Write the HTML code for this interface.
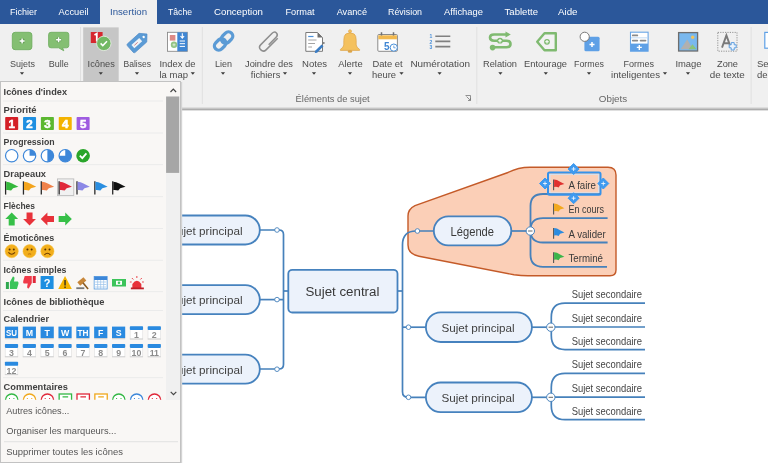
<!DOCTYPE html>
<html><head><meta charset="utf-8"><style>
html,body{margin:0;padding:0;width:768px;height:464px;overflow:hidden;background:#fff;}
svg{display:block;will-change:transform;font-family:"Liberation Sans",sans-serif;}
</style></head><body>
<svg width="768" height="464" viewBox="0 0 768 464">
<rect x="0" y="0" width="768" height="464" fill="#ffffff"/>
<path d="M530,167.2 L608,167.2 Q616,167.2 616,175 L616,270 Q616,275.8 610,275.8 L528,275.8 Q521,275.8 514,274.8 L419,256.2 Q408,254 408,245 L408,216 Q408,209 415,205.6 L508,172.5 Q518,167.2 530,167.2 Z" fill="#fbcfb7" stroke="#c45a28" stroke-width="1.4"/>
<path d="M259.8,230 H279 Q283.5,230 283.5,234.5 V364.5 Q283.5,369 279,369 H259.8" fill="none" stroke="#4681bb" stroke-width="1.7"/>
<path d="M259.8,299.6 H283.5" fill="none" stroke="#4681bb" stroke-width="1.7"/>
<path d="M283.5,291 H288.3" fill="none" stroke="#4681bb" stroke-width="1.7"/>
<rect x="150" y="215.5" width="109.8" height="29" rx="14.5" fill="#ecf2fb" stroke="#4682be" stroke-width="1.8"/>
<text x="169.2" y="234.6" font-size="11.3" fill="#424242" textLength="73.3" lengthAdjust="spacingAndGlyphs">Sujet principal</text>
<rect x="150" y="285.1" width="109.8" height="29" rx="14.5" fill="#ecf2fb" stroke="#4682be" stroke-width="1.8"/>
<text x="169.2" y="304.20000000000005" font-size="11.3" fill="#424242" textLength="73.3" lengthAdjust="spacingAndGlyphs">Sujet principal</text>
<rect x="150" y="354.7" width="109.8" height="29" rx="14.5" fill="#ecf2fb" stroke="#4682be" stroke-width="1.8"/>
<text x="169.2" y="373.8" font-size="11.3" fill="#424242" textLength="73.3" lengthAdjust="spacingAndGlyphs">Sujet principal</text>
<circle cx="277" cy="230" r="2.3" fill="#fff" stroke="#4681bb" stroke-width="0.9"/>
<circle cx="277" cy="299.6" r="2.3" fill="#fff" stroke="#4681bb" stroke-width="0.9"/>
<circle cx="277" cy="369.2" r="2.3" fill="#fff" stroke="#4681bb" stroke-width="0.9"/>
<path d="M397.5,291 H402.5" stroke="#4681bb" stroke-width="1.7"/>
<path d="M426,397.3 H408 Q402.5,397.3 402.5,391.8 V245 Q402.5,231 416,231 H434" fill="none" stroke="#4681bb" stroke-width="1.7"/>
<path d="M402.5,327.2 H426" fill="none" stroke="#4681bb" stroke-width="1.7"/>
<rect x="288.3" y="269.8" width="109.2" height="42.7" rx="4" fill="#ecf2fb" stroke="#4682be" stroke-width="1.8"/>
<text x="305.4" y="296.3" font-size="13.7" fill="#383838" textLength="74" lengthAdjust="spacingAndGlyphs">Sujet central</text>
<circle cx="408.5" cy="327.2" r="2.3" fill="#fff" stroke="#4681bb" stroke-width="0.9"/>
<rect x="425.9" y="312.4" width="106" height="29.6" rx="14.8" fill="#ecf2fb" stroke="#4682be" stroke-width="1.8"/>
<text x="441.4" y="331.7" font-size="11.3" fill="#424242" textLength="73.3" lengthAdjust="spacingAndGlyphs">Sujet principal</text>
<path d="M531.9,327.2 H551.3" stroke="#4681bb" stroke-width="1.7"/>
<path d="M645,303.2 H565 Q551.3,303.2 551.3,317.2 V335.59999999999997 Q551.3,349.59999999999997 565,349.59999999999997 H645 M551.3,327.0 H645" fill="none" stroke="#4681bb" stroke-width="1.7"/>
<circle cx="550.8" cy="327.2" r="4.2" fill="#fff" stroke="#4681bb" stroke-width="1"/><path d="M548.6,327.2 H553" stroke="#666" stroke-width="1"/>
<text x="571.7" y="298.09999999999997" font-size="10.1" fill="#444" textLength="70.2" lengthAdjust="spacingAndGlyphs">Sujet secondaire</text>
<text x="571.7" y="321.9" font-size="10.1" fill="#444" textLength="70.2" lengthAdjust="spacingAndGlyphs">Sujet secondaire</text>
<text x="571.7" y="344.49999999999994" font-size="10.1" fill="#444" textLength="70.2" lengthAdjust="spacingAndGlyphs">Sujet secondaire</text>
<circle cx="408.5" cy="397.3" r="2.3" fill="#fff" stroke="#4681bb" stroke-width="0.9"/>
<rect x="425.9" y="382.5" width="106" height="29.6" rx="14.8" fill="#ecf2fb" stroke="#4682be" stroke-width="1.8"/>
<text x="441.4" y="401.8" font-size="11.3" fill="#424242" textLength="73.3" lengthAdjust="spacingAndGlyphs">Sujet principal</text>
<path d="M531.9,397.3 H551.3" stroke="#4681bb" stroke-width="1.7"/>
<path d="M645,373.3 H565 Q551.3,373.3 551.3,387.3 V405.7 Q551.3,419.7 565,419.7 H645 M551.3,397.1 H645" fill="none" stroke="#4681bb" stroke-width="1.7"/>
<circle cx="550.8" cy="397.3" r="4.2" fill="#fff" stroke="#4681bb" stroke-width="1"/><path d="M548.6,397.3 H553" stroke="#666" stroke-width="1"/>
<text x="571.7" y="368.2" font-size="10.1" fill="#444" textLength="70.2" lengthAdjust="spacingAndGlyphs">Sujet secondaire</text>
<text x="571.7" y="392.0" font-size="10.1" fill="#444" textLength="70.2" lengthAdjust="spacingAndGlyphs">Sujet secondaire</text>
<text x="571.7" y="414.59999999999997" font-size="10.1" fill="#444" textLength="70.2" lengthAdjust="spacingAndGlyphs">Sujet secondaire</text>
<circle cx="417.4" cy="231" r="2.3" fill="#fff" stroke="#4681bb" stroke-width="0.9"/>
<rect x="433.8" y="216.3" width="77.5" height="29" rx="14.5" fill="#ecf2fb" stroke="#4682be" stroke-width="1.8"/>
<text x="450.6" y="235.5" font-size="12.3" fill="#3a3a3a" textLength="43.4" lengthAdjust="spacingAndGlyphs">Légende</text>
<path d="M511.3,231 H530.5" stroke="#4681bb" stroke-width="1.7"/>
<path d="M600,194 H543 Q530.5,194 530.5,206 V254.8 Q530.5,266.8 543,266.8 H607" fill="none" stroke="#4681bb" stroke-width="1.8"/>
<path d="M530.5,230.2 Q530.5,218.2 543,218.2 H607.6 M530.5,230.5 Q530.5,242.5 543,242.5 H607.6" fill="none" stroke="#4681bb" stroke-width="1.8"/>
<circle cx="530.3" cy="231" r="4.2" fill="#fff" stroke="#4681bb" stroke-width="1"/><path d="M528.1,231 H532.5" stroke="#666" stroke-width="1"/>
<path d="M553.6,179.4 V190.20000000000002" stroke="#555" stroke-width="1.1"/><path d="M554.1,179.4 Q557.1,179.6 559.6,181.4 L564.4,184.0 L560.1,185.20000000000002 L558.6,187.4 Q556.6,186.4 554.1,187.0 Z" fill="#e0312f"/>
<text x="568.5" y="189.2" font-size="10.9" fill="#3a3a3a" textLength="27.5" lengthAdjust="spacingAndGlyphs">A faire</text>
<path d="M553.6,203.6 V214.4" stroke="#555" stroke-width="1.1"/><path d="M554.1,203.6 Q557.1,203.79999999999998 559.6,205.6 L564.4,208.2 L560.1,209.4 L558.6,211.6 Q556.6,210.6 554.1,211.2 Z" fill="#f2a81d"/>
<text x="568.5" y="213.39999999999998" font-size="10.9" fill="#3a3a3a" textLength="35.5" lengthAdjust="spacingAndGlyphs">En cours</text>
<path d="M553.6,227.9 V238.70000000000002" stroke="#555" stroke-width="1.1"/><path d="M554.1,227.9 Q557.1,228.1 559.6,229.9 L564.4,232.5 L560.1,233.70000000000002 L558.6,235.9 Q556.6,234.9 554.1,235.5 Z" fill="#2a8be0"/>
<text x="568.5" y="237.7" font-size="10.9" fill="#3a3a3a" textLength="37.2" lengthAdjust="spacingAndGlyphs">A valider</text>
<path d="M553.6,252.20000000000002 V263.0" stroke="#555" stroke-width="1.1"/><path d="M554.1,252.20000000000002 Q557.1,252.4 559.6,254.20000000000002 L564.4,256.8 L560.1,258.0 L558.6,260.20000000000005 Q556.6,259.20000000000005 554.1,259.8 Z" fill="#3bb54a"/>
<text x="568.5" y="262.0" font-size="10.9" fill="#3a3a3a" textLength="34.5" lengthAdjust="spacingAndGlyphs">Terminé</text>
<rect x="548" y="172.4" width="52.5" height="22.4" rx="1.5" fill="none" stroke="#3592ea" stroke-width="2"/><rect x="550" y="174.4" width="48.5" height="18.4" fill="none" stroke="#cfe3f7" stroke-width="0.8"/>
<path d="M573.6,163.5 L579.1,169 L573.6,174.5 L568.1,169 Z" fill="#3f9aef" stroke="#3f9aef" stroke-width="1" stroke-linejoin="round"/><path d="M571.6,169 H575.6 M573.6,167 V171" stroke="#fff" stroke-width="0.8"/>
<path d="M573.6,192.7 L579.1,198.2 L573.6,203.7 L568.1,198.2 Z" fill="#3f9aef" stroke="#3f9aef" stroke-width="1" stroke-linejoin="round"/><path d="M571.6,198.2 H575.6 M573.6,196.2 V200.2" stroke="#fff" stroke-width="0.8"/>
<path d="M545,178.0 L550.5,183.5 L545,189.0 L539.5,183.5 Z" fill="#3f9aef" stroke="#3f9aef" stroke-width="1" stroke-linejoin="round"/><path d="M543,183.5 H547 M545,181.5 V185.5" stroke="#fff" stroke-width="0.8"/>
<path d="M603.3,178.0 L608.8,183.5 L603.3,189.0 L597.8,183.5 Z" fill="#3f9aef" stroke="#3f9aef" stroke-width="1" stroke-linejoin="round"/><path d="M601.3,183.5 H605.3 M603.3,181.5 V185.5" stroke="#fff" stroke-width="0.8"/>
<rect x="0" y="24" width="768" height="84" fill="#f0f0f0"/>
<rect x="0" y="107.4" width="768" height="1" fill="#d2d2d2"/><rect x="0" y="108.4" width="768" height="1.7" fill="#acacac"/><rect x="0" y="110.1" width="768" height="0.9" fill="#dcdcdc"/>
<rect x="80" y="27" width="1" height="77" fill="#e0e0e0"/>
<rect x="201.8" y="27" width="1" height="77" fill="#e0e0e0"/>
<rect x="476.3" y="27" width="1" height="77" fill="#e0e0e0"/>
<rect x="750.6" y="27" width="1" height="77" fill="#e0e0e0"/>
<rect x="83.2" y="27.4" width="35.5" height="53.6" fill="#c6c6c6"/>
<text x="10" y="66.8" font-size="9.5" fill="#4c4c4c" textLength="25" lengthAdjust="spacingAndGlyphs">Sujets</text>
<path d="M19.9,72.3 H24.1 L22,74.69999999999999 Z" fill="#3a3a3a"/>
<text x="48.8" y="66.8" font-size="9.5" fill="#4c4c4c" textLength="20" lengthAdjust="spacingAndGlyphs">Bulle</text>
<text x="87.6" y="66.8" font-size="9.5" fill="#4c4c4c" textLength="27.2" lengthAdjust="spacingAndGlyphs">Icônes</text>
<path d="M98.7,72.3 H102.89999999999999 L100.8,74.69999999999999 Z" fill="#3a3a3a"/>
<text x="123.5" y="66.8" font-size="9.5" fill="#4c4c4c" textLength="27.5" lengthAdjust="spacingAndGlyphs">Balises</text>
<path d="M134.9,72.3 H139.1 L137,74.69999999999999 Z" fill="#3a3a3a"/>
<text x="159.5" y="66.8" font-size="9.5" fill="#4c4c4c" textLength="36" lengthAdjust="spacingAndGlyphs">Index de</text>
<text x="159.5" y="77.8" font-size="9.5" fill="#4c4c4c" textLength="28.5" lengthAdjust="spacingAndGlyphs">la map</text>
<path d="M190.70000000000002,72.3 H194.9 L192.8,74.69999999999999 Z" fill="#3a3a3a"/>
<text x="215" y="66.8" font-size="9.5" fill="#4c4c4c" textLength="17" lengthAdjust="spacingAndGlyphs">Lien</text>
<path d="M220.9,72.3 H225.1 L223,74.69999999999999 Z" fill="#3a3a3a"/>
<text x="245" y="66.8" font-size="9.5" fill="#4c4c4c" textLength="48" lengthAdjust="spacingAndGlyphs">Joindre des</text>
<text x="250.8" y="77.8" font-size="9.5" fill="#4c4c4c" textLength="29.5" lengthAdjust="spacingAndGlyphs">fichiers</text>
<path d="M282.9,72.3 H287.1 L285,74.69999999999999 Z" fill="#3a3a3a"/>
<text x="302" y="66.8" font-size="9.5" fill="#4c4c4c" textLength="25" lengthAdjust="spacingAndGlyphs">Notes</text>
<path d="M311.9,72.3 H316.1 L314,74.69999999999999 Z" fill="#3a3a3a"/>
<text x="338.2" y="66.8" font-size="9.5" fill="#4c4c4c" textLength="24.5" lengthAdjust="spacingAndGlyphs">Alerte</text>
<path d="M347.9,72.3 H352.1 L350,74.69999999999999 Z" fill="#3a3a3a"/>
<text x="372.4" y="66.8" font-size="9.5" fill="#4c4c4c" textLength="30.2" lengthAdjust="spacingAndGlyphs">Date et</text>
<text x="372" y="77.8" font-size="9.5" fill="#4c4c4c" textLength="24" lengthAdjust="spacingAndGlyphs">heure</text>
<path d="M399.4,72.3 H403.6 L401.5,74.69999999999999 Z" fill="#3a3a3a"/>
<text x="410.4" y="66.8" font-size="9.5" fill="#4c4c4c" textLength="59.6" lengthAdjust="spacingAndGlyphs">Numérotation</text>
<path d="M437.5,72.3 H441.70000000000005 L439.6,74.69999999999999 Z" fill="#3a3a3a"/>
<text x="483" y="66.8" font-size="9.5" fill="#4c4c4c" textLength="34" lengthAdjust="spacingAndGlyphs">Relation</text>
<path d="M498.29999999999995,72.3 H502.5 L500.4,74.69999999999999 Z" fill="#3a3a3a"/>
<text x="524" y="66.8" font-size="9.5" fill="#4c4c4c" textLength="43" lengthAdjust="spacingAndGlyphs">Entourage</text>
<path d="M543.6999999999999,72.3 H547.9 L545.8,74.69999999999999 Z" fill="#3a3a3a"/>
<text x="574" y="66.8" font-size="9.5" fill="#4c4c4c" textLength="30" lengthAdjust="spacingAndGlyphs">Formes</text>
<path d="M586.9,72.3 H591.1 L589,74.69999999999999 Z" fill="#3a3a3a"/>
<text x="623.4" y="66.8" font-size="9.5" fill="#4c4c4c" textLength="30.6" lengthAdjust="spacingAndGlyphs">Formes</text>
<text x="611" y="77.8" font-size="9.5" fill="#4c4c4c" textLength="49" lengthAdjust="spacingAndGlyphs">inteligentes</text>
<path d="M662.9,72.3 H667.1 L665,74.69999999999999 Z" fill="#3a3a3a"/>
<text x="675.4" y="66.8" font-size="9.5" fill="#4c4c4c" textLength="26.2" lengthAdjust="spacingAndGlyphs">Image</text>
<path d="M685.9,72.3 H690.1 L688,74.69999999999999 Z" fill="#3a3a3a"/>
<text x="717" y="66.8" font-size="9.5" fill="#4c4c4c" textLength="21" lengthAdjust="spacingAndGlyphs">Zone</text>
<text x="709.8" y="77.8" font-size="9.5" fill="#4c4c4c" textLength="35" lengthAdjust="spacingAndGlyphs">de texte</text>
<text x="757" y="66.8" font-size="9.5" fill="#4c4c4c">Se</text>
<text x="757" y="77.8" font-size="9.5" fill="#4c4c4c">de</text>
<text x="295.6" y="102" font-size="9.5" fill="#666" textLength="74.1" lengthAdjust="spacingAndGlyphs">Éléments de sujet</text>
<text x="598.8" y="102" font-size="9.5" fill="#666" textLength="28.4" lengthAdjust="spacingAndGlyphs">Objets</text>
<path d="M465.5,95.5 H470.5 V100.5 M466.5,96.5 L470,100 M468,100.5 H470.5 V98" fill="none" stroke="#777" stroke-width="0.8"/>
<rect x="0" y="0" width="768" height="24" fill="#2b579a"/>
<rect x="100" y="0" width="57" height="24.5" fill="#f0f0f0"/>
<text x="10" y="15" font-size="9.5" fill="#ffffff" textLength="27" lengthAdjust="spacingAndGlyphs">Fichier</text>
<text x="58.6" y="15" font-size="9.5" fill="#ffffff" textLength="30" lengthAdjust="spacingAndGlyphs">Accueil</text>
<text x="168" y="15" font-size="9.5" fill="#ffffff" textLength="24" lengthAdjust="spacingAndGlyphs">Tâche</text>
<text x="214" y="15" font-size="9.5" fill="#ffffff" textLength="49" lengthAdjust="spacingAndGlyphs">Conception</text>
<text x="285.4" y="15" font-size="9.5" fill="#ffffff" textLength="29.2" lengthAdjust="spacingAndGlyphs">Format</text>
<text x="336.7" y="15" font-size="9.5" fill="#ffffff" textLength="30.3" lengthAdjust="spacingAndGlyphs">Avancé</text>
<text x="388" y="15" font-size="9.5" fill="#ffffff" textLength="34" lengthAdjust="spacingAndGlyphs">Révision</text>
<text x="444" y="15" font-size="9.5" fill="#ffffff" textLength="39" lengthAdjust="spacingAndGlyphs">Affichage</text>
<text x="504.6" y="15" font-size="9.5" fill="#ffffff" textLength="33.4" lengthAdjust="spacingAndGlyphs">Tablette</text>
<text x="558" y="15" font-size="9.5" fill="#ffffff" textLength="19.5" lengthAdjust="spacingAndGlyphs">Aide</text>
<text x="110" y="15" font-size="9.5" fill="#2b579a" textLength="37" lengthAdjust="spacingAndGlyphs">Insertion</text>
<rect x="12.3" y="32.3" width="19.6" height="17.4" rx="2.8" fill="#84bf72" stroke="#6aab5a" stroke-width="0.8"/>
<path d="M19.4,41 H24.8 M22.1,38.3 V43.7" stroke="#5f9a50" stroke-width="2.8"/><path d="M19.6,41 H24.6 M22.1,38.5 V43.5" stroke="#fff" stroke-width="1.5"/>
<path d="M51,32.3 H66.5 Q68.8,32.3 68.8,34.6 V45.5 Q68.8,47.8 66.5,47.8 H62.6 L63.8,50.8 L58.6,47.8 H51 Q48.6,47.8 48.6,45.5 V34.6 Q48.6,32.3 51,32.3 Z" fill="#84bf72" stroke="#6aab5a" stroke-width="0.8"/>
<path d="M55.9,39.8 H61.3 M58.6,37.1 V42.5" stroke="#5f9a50" stroke-width="2.8"/><path d="M56.1,39.8 H61.1 M58.6,37.3 V42.3" stroke="#fff" stroke-width="1.5"/>
<rect x="90.8" y="32" width="11.8" height="11" fill="#d6282e"/><path d="M94.5,35 L96.8,33.6 V41.5" fill="none" stroke="#fff" stroke-width="1.8"/>
<circle cx="103.8" cy="43.4" r="7.2" fill="#72b864" stroke="#e8f0e4" stroke-width="0.8"/><path d="M100.6,43.4 L102.8,45.6 L107,41.3" fill="none" stroke="#fff" stroke-width="1.5"/>
<g transform="translate(139.2,41) rotate(-42)"><path d="M-10.5,-5.8 H5 L10.5,0 L5,5.8 H-10.5 Q-12,5.8 -12,4.3 V-4.3 Q-12,-5.8 -10.5,-5.8 Z" fill="#5b9bd5" stroke="#4a88c6" stroke-width="0.6"/><rect x="-8.5" y="-2.2" width="10.5" height="4.4" fill="#eef3f8"/><path d="M-6.5,0 H-2" stroke="#d07070" stroke-width="0.8"/><circle cx="6" cy="0" r="1.2" fill="#fff"/></g>
<rect x="167.5" y="32.3" width="19.8" height="19" fill="#fff" stroke="#8a8a8a" stroke-width="0.9"/><rect x="177.3" y="32.3" width="10" height="19" fill="#3f86d3"/>
<rect x="169.8" y="35" width="5.6" height="5.6" fill="#de8a86"/><circle cx="174" cy="44.8" r="3.2" fill="#94c485"/><path d="M172.5,44.8 H175.5 M174,43.3 V46.3" stroke="#e8f2e4" stroke-width="0.8"/><path d="M179.7,41 H185 M179.7,43.7 H185 M179.7,46.4 H185" stroke="#fff" stroke-width="1"/><path d="M182.3,33.2 V38 M180.5,36 L182.3,38.2 L184.1,36" fill="none" stroke="#fff" stroke-width="1.1"/>
<g transform="translate(223.6,41) rotate(-45)"><rect x="-11.2" y="-4.3" width="12.6" height="8.6" rx="4.3" fill="none" stroke="#5b9bd5" stroke-width="3.3"/><rect x="-1.4" y="-4.3" width="12.6" height="8.6" rx="4.3" fill="none" stroke="#5b9bd5" stroke-width="3.3"/></g>
<g transform="translate(268.8,40.6) rotate(-45)"><path d="M-3,2.8 H7.5 Q10.8,2.8 10.8,0 Q10.8,-2.8 7.5,-2.8 H-8.5 Q-12.2,-2.8 -12.2,0.6 Q-12.2,4.6 -8.5,4.6 H8" fill="none" stroke="#8e8e8e" stroke-width="1.5"/></g>
<path d="M305.8,32.5 H317.5 L322.5,37.5 V51.3 H305.8 Z" fill="#fff" stroke="#7a7a7a" stroke-width="1"/><path d="M317.5,32.5 V37.5 H322.5 Z" fill="#707070"/>
<path d="M308.2,36.5 H313.5" stroke="#4a90d9" stroke-width="1.2"/><path d="M308.2,40 H316.5 M308.2,43.5 H315 M308.2,47 H312" stroke="#9a9a9a" stroke-width="0.9"/><path d="M315.2,50.8 L321.6,44.4 L323.5,46.3 L317.1,52.7 L314.8,53 Z" fill="#3a7cc4"/><circle cx="323.8" cy="43" r="0.9" fill="#777"/>
<circle cx="350" cy="31.2" r="1.5" fill="#f4c15e" stroke="#dca449" stroke-width="0.6"/><path d="M345.8,34 Q350,31.6 354.2,34 Q356.2,35.6 356.2,40.5 V45 Q356.6,47.6 359.6,49.4 V50.4 H340.4 V49.4 Q343.4,47.6 343.8,45 V40.5 Q343.8,35.6 345.8,34 Z" fill="#f4c15e" stroke="#dca449" stroke-width="0.7"/><ellipse cx="350" cy="51.4" rx="2.3" ry="1.4" fill="#dca449"/>
<rect x="377.8" y="34.5" width="19.6" height="16.8" rx="1" fill="#fff" stroke="#8a8a8a" stroke-width="1"/><rect x="378.3" y="35.3" width="18.6" height="4" fill="#f2b94e"/><path d="M381.5,32.3 V35.5 M393.5,32.3 V35.5" stroke="#707070" stroke-width="1.5"/><text x="384" y="49.6" font-size="10" font-weight="bold" fill="#3f86d3">5</text><circle cx="393.8" cy="47.6" r="3.6" fill="#fff" stroke="#4a90d9" stroke-width="1"/><path d="M393.8,45.6 V47.8 H395.6" fill="none" stroke="#4a90d9" stroke-width="0.8"/>
<text x="429.5" y="38.3" font-size="5" font-weight="bold" fill="#4a90d9">1</text><text x="429.5" y="43.5" font-size="5" font-weight="bold" fill="#4a90d9">2</text><text x="429.5" y="48.7" font-size="5" font-weight="bold" fill="#4a90d9">3</text>
<path d="M435.3,36.3 H450.3 M435.3,41.4 H450.3 M435.3,46.6 H450.3" stroke="#808080" stroke-width="1.6"/>
<path d="M506,34.5 H494 Q490,34.5 490,37.6 Q490,40.7 494,40.7 H506.5 Q510.5,40.7 510.5,43.9 Q510.5,47.2 506.5,47.2 H493" fill="none" stroke="#7fba70" stroke-width="2.6"/><path d="M505.5,31.5 L510.8,34.5 L505.5,37.5 Z" fill="#7fba70"/><circle cx="492.6" cy="47.6" r="2.8" fill="#7fba70"/><circle cx="500" cy="40.7" r="2.9" fill="#7fba70"/><path d="M498.2,40.7 H501.8 M500,38.9 V42.5" stroke="#fff" stroke-width="1.1"/>
<path d="M544.5,33.3 H555.8 V50.3 H544.5 L537.2,41.8 Z" fill="#f2f2f2" stroke="#7fba70" stroke-width="2.4" stroke-linejoin="round"/><circle cx="547" cy="41.8" r="2.9" fill="#7fba70"/><path d="M545.2,41.8 H548.8 M547,40 V43.6" stroke="#fff" stroke-width="1.1"/>
<rect x="584.4" y="36.7" width="15.2" height="14.6" rx="1.5" fill="#5ea0e6"/><circle cx="584.7" cy="36.8" r="4.6" fill="#fff" stroke="#7a7a7a" stroke-width="1"/><path d="M589.5,44.5 H594.5 M592,42 V47" stroke="#fff" stroke-width="1.5"/>
<rect x="630.5" y="32.2" width="17.6" height="19" fill="#fff" stroke="#6aa6e6" stroke-width="1.1"/><rect x="630.5" y="43.6" width="17.6" height="7.6" fill="#5ea0e6"/><path d="M631,37.8 H647.6" stroke="#b8d4f0" stroke-width="0.8"/><path d="M632.8,35.4 H637.3 M632.8,40.6 H637.3 M640.6,40.6 H645.5" stroke="#8a8a8a" stroke-width="1.8" stroke-linecap="round"/><path d="M636.8,47.4 H641.8 M639.3,44.9 V49.9" stroke="#fff" stroke-width="1.4"/>
<rect x="678.6" y="32.6" width="19" height="18.4" fill="#79b8ee" stroke="#6e6e6e" stroke-width="1.3"/><path d="M680.5,49.2 L687.2,39.5 L693,49.2 Z" fill="#b0b0b0"/><path d="M688.5,49.2 L692.5,44.2 L696.5,49.2 Z" fill="#8cc47a"/><circle cx="692.7" cy="37.2" r="1.7" fill="#f3c45a"/>
<rect x="717.8" y="32.4" width="19.2" height="18.8" fill="none" stroke="#8a8a8a" stroke-width="0.9" stroke-dasharray="1.2,1.2"/><path d="M722,47.6 L726.4,35.4 L730.8,47.6 M723.6,43.2 H729.2" fill="none" stroke="#7a7a7a" stroke-width="1.9"/><path d="M731.2,42.6 H734.2 V44.8 H736.2 V47.8 H734.2 V50 H731.2 V47.8 H729.2 V44.8 H731.2 Z" fill="#eaf3fc" stroke="#5e9ee0" stroke-width="1"/>
<rect x="764.8" y="32.4" width="8" height="15.8" fill="#fff" stroke="#5ea0e6" stroke-width="1.2"/>
<rect x="0.5" y="81.5" width="180" height="381" fill="#f9f7f5" stroke="#c2c2c2" stroke-width="1"/>
<rect x="166" y="96.5" width="14" height="303.5" fill="#f0f0f0"/><rect x="181" y="82" width="1.2" height="381" fill="#d4d4d4"/>
<rect x="166.1" y="96.5" width="13.1" height="76.4" fill="#a6a6a6"/>
<path d="M170.5,92 L173.3,89.2 L176.1,92" fill="none" stroke="#444" stroke-width="1.2"/>
<path d="M170.7,391.8 L173.5,394.6 L176.3,391.8" fill="none" stroke="#444" stroke-width="1.2"/>
<rect x="3" y="100.5" width="160" height="1" fill="#ebebeb"/>
<rect x="3" y="132.5" width="160" height="1" fill="#ebebeb"/>
<rect x="3" y="164.1" width="160" height="1" fill="#ebebeb"/>
<rect x="3" y="196.1" width="160" height="1" fill="#ebebeb"/>
<rect x="3" y="228.0" width="160" height="1" fill="#ebebeb"/>
<rect x="3" y="259.8" width="160" height="1" fill="#ebebeb"/>
<rect x="3" y="291.1" width="160" height="1" fill="#ebebeb"/>
<rect x="3" y="310.0" width="160" height="1" fill="#ebebeb"/>
<rect x="3" y="377.1" width="160" height="1" fill="#ebebeb"/>
<text x="3.6" y="94.9" font-size="9.5" fill="#404040" textLength="63.4" lengthAdjust="spacingAndGlyphs" font-weight="bold">Icônes d&#x27;index</text>
<text x="3.6" y="112.9" font-size="9.5" fill="#404040" textLength="33" lengthAdjust="spacingAndGlyphs" font-weight="bold">Priorité</text>
<text x="3.6" y="144.9" font-size="9.5" fill="#404040" textLength="51" lengthAdjust="spacingAndGlyphs" font-weight="bold">Progression</text>
<text x="3.6" y="177.20000000000002" font-size="9.5" fill="#404040" textLength="42.4" lengthAdjust="spacingAndGlyphs" font-weight="bold">Drapeaux</text>
<text x="3.6" y="208.70000000000002" font-size="9.5" fill="#404040" textLength="31.4" lengthAdjust="spacingAndGlyphs" font-weight="bold">Flèches</text>
<text x="3.6" y="240.70000000000002" font-size="9.5" fill="#404040" textLength="50.7" lengthAdjust="spacingAndGlyphs" font-weight="bold">Émoticônes</text>
<text x="3.6" y="272.9" font-size="9.5" fill="#404040" textLength="62.8" lengthAdjust="spacingAndGlyphs" font-weight="bold">Icônes simples</text>
<text x="3.6" y="304.9" font-size="9.5" fill="#404040" textLength="100.9" lengthAdjust="spacingAndGlyphs" font-weight="bold">Icônes de bibliothèque</text>
<text x="3.6" y="322.09999999999997" font-size="9.5" fill="#404040" textLength="45.4" lengthAdjust="spacingAndGlyphs" font-weight="bold">Calendrier</text>
<text x="3.6" y="390.2" font-size="9.5" fill="#404040" textLength="64.3" lengthAdjust="spacingAndGlyphs" font-weight="bold">Commentaires</text>
<rect x="5.20" y="117" width="13" height="13" rx="0.8" fill="#d41f26"/>
<text x="11.7" y="127.6" font-size="11.5" fill="#fff" font-weight="bold" text-anchor="middle" stroke="#fff" stroke-width="0.6">1</text>
<rect x="23.05" y="117" width="13" height="13" rx="0.8" fill="#1e8fe1"/>
<text x="29.55" y="127.6" font-size="11.5" fill="#fff" font-weight="bold" text-anchor="middle" stroke="#fff" stroke-width="0.6">2</text>
<rect x="40.90" y="117" width="13" height="13" rx="0.8" fill="#5cb830"/>
<text x="47.400000000000006" y="127.6" font-size="11.5" fill="#fff" font-weight="bold" text-anchor="middle" stroke="#fff" stroke-width="0.6">3</text>
<rect x="58.75" y="117" width="13" height="13" rx="0.8" fill="#f4b300"/>
<text x="65.25" y="127.6" font-size="11.5" fill="#fff" font-weight="bold" text-anchor="middle" stroke="#fff" stroke-width="0.6">4</text>
<rect x="76.60" y="117" width="13" height="13" rx="0.8" fill="#9f5ce0"/>
<text x="83.10000000000001" y="127.6" font-size="11.5" fill="#fff" font-weight="bold" text-anchor="middle" stroke="#fff" stroke-width="0.6">5</text>
<circle cx="11.70" cy="155.7" r="6.2" fill="#fff" stroke="#3d87d9" stroke-width="1.2"/>
<circle cx="29.55" cy="155.7" r="6.2" fill="#fff" stroke="#3d87d9" stroke-width="1.2"/>
<path d="M29.55,155.7 V149.5 A6.2,6.2 0 0 1 35.75,155.7 Z" fill="#3d87d9"/>
<circle cx="47.40" cy="155.7" r="6.2" fill="#fff" stroke="#3d87d9" stroke-width="1.2"/>
<path d="M47.40,149.5 A6.2,6.2 0 0 1 47.40,161.89999999999998 Z" fill="#3d87d9"/>
<circle cx="65.25" cy="155.7" r="6.2" fill="#fff" stroke="#3d87d9" stroke-width="1.2"/>
<path d="M65.25,155.7 V149.5 A6.2,6.2 0 1 1 59.05,155.7 Z" fill="#3d87d9"/>
<circle cx="83.10" cy="155.7" r="6.8" fill="#2aa52a"/><path d="M79.80,155.7 L82.30,158.2 L86.40,153.39999999999998" fill="none" stroke="#fff" stroke-width="1.8"/>
<rect x="57.4" y="178.9" width="16.4" height="16.7" fill="#f1f1f1" stroke="#b8b8b8" stroke-width="0.8"/>
<path d="M5.60,181.3 V194.6" stroke="#2a2a2a" stroke-width="1.3"/><path d="M6.20,181.8 Q9.10,181.8 12.10,183.6 L18.40,186.8 L13.10,188.2 L11.10,190.6 Q8.60,189.6 6.20,190 Z" fill="#35b83c"/>
<path d="M23.45,181.3 V194.6" stroke="#2a2a2a" stroke-width="1.3"/><path d="M24.05,181.8 Q26.95,181.8 29.95,183.6 L36.25,186.8 L30.95,188.2 L28.95,190.6 Q26.45,189.6 24.05,190 Z" fill="#f4a41c"/>
<path d="M41.30,181.3 V194.6" stroke="#2a2a2a" stroke-width="1.3"/><path d="M41.90,181.8 Q44.80,181.8 47.80,183.6 L54.10,186.8 L48.80,188.2 L46.80,190.6 Q44.30,189.6 41.90,190 Z" fill="#f0824a"/>
<path d="M59.15,181.3 V194.6" stroke="#2a2a2a" stroke-width="1.3"/><path d="M59.75,181.8 Q62.65,181.8 65.65,183.6 L71.95,186.8 L66.65,188.2 L64.65,190.6 Q62.15,189.6 59.75,190 Z" fill="#e0283a"/>
<path d="M77.00,181.3 V194.6" stroke="#2a2a2a" stroke-width="1.3"/><path d="M77.60,181.8 Q80.50,181.8 83.50,183.6 L89.80,186.8 L84.50,188.2 L82.50,190.6 Q80.00,189.6 77.60,190 Z" fill="#8c88e6"/>
<path d="M94.85,181.3 V194.6" stroke="#2a2a2a" stroke-width="1.3"/><path d="M95.45,181.8 Q98.35,181.8 101.35,183.6 L107.65,186.8 L102.35,188.2 L100.35,190.6 Q97.85,189.6 95.45,190 Z" fill="#2a8ee0"/>
<path d="M112.70,181.3 V194.6" stroke="#2a2a2a" stroke-width="1.3"/><path d="M113.30,181.8 Q116.20,181.8 119.20,183.6 L125.50,186.8 L120.20,188.2 L118.20,190.6 Q115.70,189.6 113.30,190 Z" fill="#111111"/>
<g transform="translate(11.70,219) rotate(0)"><path d="M0,-6.6 L6.4,0 H3 V6.6 H-3 V0 H-6.4 Z" fill="#37c048"/></g>
<g transform="translate(29.55,219) rotate(180)"><path d="M0,-6.6 L6.4,0 H3 V6.6 H-3 V0 H-6.4 Z" fill="#e8323a"/></g>
<g transform="translate(47.40,219) rotate(-90)"><path d="M0,-6.6 L6.4,0 H3 V6.6 H-3 V0 H-6.4 Z" fill="#e8323a"/></g>
<g transform="translate(65.25,219) rotate(90)"><path d="M0,-6.6 L6.4,0 H3 V6.6 H-3 V0 H-6.4 Z" fill="#37c048"/></g>
<circle cx="11.70" cy="251.2" r="6.6" fill="#f2ae1c" stroke="#f7c445" stroke-width="0.5"/><circle cx="9.60" cy="249.6" r="1" fill="#5a3200"/><circle cx="13.80" cy="249.6" r="1" fill="#5a3200"/>
<path d="M8.40,252.39999999999998 Q11.70,256.0 15.00,252.39999999999998" fill="none" stroke="#6a3a00" stroke-width="1.1"/>
<circle cx="29.55" cy="251.2" r="6.6" fill="#f2ae1c" stroke="#f7c445" stroke-width="0.5"/><circle cx="27.45" cy="249.6" r="1" fill="#5a3200"/><circle cx="31.65" cy="249.6" r="1" fill="#5a3200"/>
<path d="M27.95,254.39999999999998 Q29.55,253.0 31.15,254.39999999999998" fill="none" stroke="#c07a10" stroke-width="1.1"/>
<circle cx="47.40" cy="251.2" r="6.6" fill="#f2ae1c" stroke="#f7c445" stroke-width="0.5"/><circle cx="45.30" cy="249.6" r="1" fill="#5a3200"/><circle cx="49.50" cy="249.6" r="1" fill="#5a3200"/>
<path d="M44.40,254.79999999999998 Q47.40,251.79999999999998 50.40,254.79999999999998" fill="none" stroke="#6a3a00" stroke-width="1.1"/>
<path d="M5.9,282 H8.9 V289 H5.9 Z" fill="#2fa84f"/><path d="M9.9,282 L12.9,276.5 Q14.9,276.5 14.4,279 L13.9,281.5 H17.9 Q18.9,282.5 18.4,284 L16.9,289 H9.9 Z" fill="#3cc45a"/>
<path d="M32.75,276 H35.75 V283 H32.75 Z" fill="#e0283a"/><path d="M31.75,283 L28.75,288.5 Q26.75,288.5 27.25,286 L27.75,283.5 H23.75 Q22.75,282.5 23.25,281 L24.75,276 H31.75 Z" fill="#f03a48"/>
<rect x="40.60" y="276" width="13" height="13" fill="#1e8fe1"/>
<text x="47.1" y="287" font-size="11" fill="#fff" font-weight="bold" text-anchor="middle">?</text>
<path d="M65.05,276 L71.85,289 H58.25 Z" fill="#f5b400"/><path d="M65.05,280 V285.5 M65.05,286.6 V288" stroke="#222" stroke-width="1.3"/>
<g transform="translate(82.30,282) rotate(-40)"><rect x="-4" y="-3" width="8" height="4.5" fill="#c8873a"/><rect x="-0.8" y="1" width="1.6" height="8" fill="#8a5a20"/></g><rect x="76.30" y="287.3" width="8" height="1.8" fill="#777"/>
<rect x="94.15" y="276.5" width="13" height="12.5" fill="#fff" stroke="#5a9de0" stroke-width="0.8"/><rect x="94.15" y="276.5" width="13" height="3.5" fill="#3d87d9"/><path d="M95.15,282 H106.15 M95.15,284.5 H106.15 M95.15,287 H106.15 M97.65,280 V289 M100.65,280 V289 M103.65,280 V289" stroke="#9cc3ea" stroke-width="0.7"/>
<rect x="112.00" y="279" width="14" height="7.5" fill="#3cc45a"/><rect x="116.00" y="280.8" width="6" height="4" fill="#fff"/><circle cx="119.00" cy="282.8" r="1.3" fill="#3cc45a"/>
<path d="M132.35,289 V284 Q136.85,277.5 141.35,284 V289 Z" fill="#e8323a"/><rect x="130.85" y="287.5" width="13" height="1.8" fill="#c02028"/><path d="M136.85,276 V278 M131.85,278 L133.35,279.5 M141.85,278 L140.35,279.5 M129.85,282 H131.65 M142.05,282 H143.85" stroke="#e8323a" stroke-width="0.9"/>
<rect x="4.90" y="326.59999999999997" width="13.2" height="11.4" fill="#2a8ae0"/><rect x="4.90" y="338.2" width="13.2" height="1" fill="#c8c8c8"/>
<text x="11.5" y="335.59999999999997" font-size="8.8" fill="#fff" font-weight="bold" text-anchor="middle" textLength="11" lengthAdjust="spacingAndGlyphs">SU</text>
<rect x="22.75" y="326.59999999999997" width="13.2" height="11.4" fill="#2a8ae0"/><rect x="22.75" y="338.2" width="13.2" height="1" fill="#c8c8c8"/>
<text x="29.35" y="335.59999999999997" font-size="8.8" fill="#fff" font-weight="bold" text-anchor="middle">M</text>
<rect x="40.60" y="326.59999999999997" width="13.2" height="11.4" fill="#2a8ae0"/><rect x="40.60" y="338.2" width="13.2" height="1" fill="#c8c8c8"/>
<text x="47.2" y="335.59999999999997" font-size="8.8" fill="#fff" font-weight="bold" text-anchor="middle">T</text>
<rect x="58.45" y="326.59999999999997" width="13.2" height="11.4" fill="#2a8ae0"/><rect x="58.45" y="338.2" width="13.2" height="1" fill="#c8c8c8"/>
<text x="65.05" y="335.59999999999997" font-size="8.8" fill="#fff" font-weight="bold" text-anchor="middle">W</text>
<rect x="76.30" y="326.59999999999997" width="13.2" height="11.4" fill="#2a8ae0"/><rect x="76.30" y="338.2" width="13.2" height="1" fill="#c8c8c8"/>
<text x="82.9" y="335.59999999999997" font-size="8.8" fill="#fff" font-weight="bold" text-anchor="middle" textLength="11" lengthAdjust="spacingAndGlyphs">TH</text>
<rect x="94.15" y="326.59999999999997" width="13.2" height="11.4" fill="#2a8ae0"/><rect x="94.15" y="338.2" width="13.2" height="1" fill="#c8c8c8"/>
<text x="100.75" y="335.59999999999997" font-size="8.8" fill="#fff" font-weight="bold" text-anchor="middle">F</text>
<rect x="112.00" y="326.59999999999997" width="13.2" height="11.4" fill="#2a8ae0"/><rect x="112.00" y="338.2" width="13.2" height="1" fill="#c8c8c8"/>
<text x="118.60000000000001" y="335.59999999999997" font-size="8.8" fill="#fff" font-weight="bold" text-anchor="middle">S</text>
<rect x="130.15" y="326.9" width="12.6" height="12" fill="#fff" stroke="#dedede" stroke-width="0.6"/><rect x="129.85" y="338.59999999999997" width="13.2" height="0.9" fill="#cdcdcd"/><rect x="129.85" y="326.2" width="13.2" height="3.9" rx="0.8" fill="#2a8ae0"/>
<text x="136.45000000000002" y="337.9" font-size="8.8" fill="#8c8c8c" font-weight="bold" text-anchor="middle">1</text>
<rect x="148.00" y="326.9" width="12.6" height="12" fill="#fff" stroke="#dedede" stroke-width="0.6"/><rect x="147.70" y="338.59999999999997" width="13.2" height="0.9" fill="#cdcdcd"/><rect x="147.70" y="326.2" width="13.2" height="3.9" rx="0.8" fill="#2a8ae0"/>
<text x="154.3" y="337.9" font-size="8.8" fill="#8c8c8c" font-weight="bold" text-anchor="middle">2</text>
<rect x="5.20" y="344.7" width="12.6" height="12" fill="#fff" stroke="#dedede" stroke-width="0.6"/><rect x="4.90" y="356.4" width="13.2" height="0.9" fill="#cdcdcd"/><rect x="4.90" y="344.0" width="13.2" height="3.9" rx="0.8" fill="#2a8ae0"/>
<text x="11.5" y="355.7" font-size="8.8" fill="#8c8c8c" font-weight="bold" text-anchor="middle">3</text>
<rect x="23.05" y="344.7" width="12.6" height="12" fill="#fff" stroke="#dedede" stroke-width="0.6"/><rect x="22.75" y="356.4" width="13.2" height="0.9" fill="#cdcdcd"/><rect x="22.75" y="344.0" width="13.2" height="3.9" rx="0.8" fill="#2a8ae0"/>
<text x="29.35" y="355.7" font-size="8.8" fill="#8c8c8c" font-weight="bold" text-anchor="middle">4</text>
<rect x="40.90" y="344.7" width="12.6" height="12" fill="#fff" stroke="#dedede" stroke-width="0.6"/><rect x="40.60" y="356.4" width="13.2" height="0.9" fill="#cdcdcd"/><rect x="40.60" y="344.0" width="13.2" height="3.9" rx="0.8" fill="#2a8ae0"/>
<text x="47.2" y="355.7" font-size="8.8" fill="#8c8c8c" font-weight="bold" text-anchor="middle">5</text>
<rect x="58.75" y="344.7" width="12.6" height="12" fill="#fff" stroke="#dedede" stroke-width="0.6"/><rect x="58.45" y="356.4" width="13.2" height="0.9" fill="#cdcdcd"/><rect x="58.45" y="344.0" width="13.2" height="3.9" rx="0.8" fill="#2a8ae0"/>
<text x="65.05" y="355.7" font-size="8.8" fill="#8c8c8c" font-weight="bold" text-anchor="middle">6</text>
<rect x="76.60" y="344.7" width="12.6" height="12" fill="#fff" stroke="#dedede" stroke-width="0.6"/><rect x="76.30" y="356.4" width="13.2" height="0.9" fill="#cdcdcd"/><rect x="76.30" y="344.0" width="13.2" height="3.9" rx="0.8" fill="#2a8ae0"/>
<text x="82.9" y="355.7" font-size="8.8" fill="#8c8c8c" font-weight="bold" text-anchor="middle">7</text>
<rect x="94.45" y="344.7" width="12.6" height="12" fill="#fff" stroke="#dedede" stroke-width="0.6"/><rect x="94.15" y="356.4" width="13.2" height="0.9" fill="#cdcdcd"/><rect x="94.15" y="344.0" width="13.2" height="3.9" rx="0.8" fill="#2a8ae0"/>
<text x="100.75" y="355.7" font-size="8.8" fill="#8c8c8c" font-weight="bold" text-anchor="middle">8</text>
<rect x="112.30" y="344.7" width="12.6" height="12" fill="#fff" stroke="#dedede" stroke-width="0.6"/><rect x="112.00" y="356.4" width="13.2" height="0.9" fill="#cdcdcd"/><rect x="112.00" y="344.0" width="13.2" height="3.9" rx="0.8" fill="#2a8ae0"/>
<text x="118.60000000000001" y="355.7" font-size="8.8" fill="#8c8c8c" font-weight="bold" text-anchor="middle">9</text>
<rect x="130.15" y="344.7" width="12.6" height="12" fill="#fff" stroke="#dedede" stroke-width="0.6"/><rect x="129.85" y="356.4" width="13.2" height="0.9" fill="#cdcdcd"/><rect x="129.85" y="344.0" width="13.2" height="3.9" rx="0.8" fill="#2a8ae0"/>
<text x="136.45000000000002" y="355.7" font-size="8.8" fill="#8c8c8c" font-weight="bold" text-anchor="middle">10</text>
<rect x="148.00" y="344.7" width="12.6" height="12" fill="#fff" stroke="#dedede" stroke-width="0.6"/><rect x="147.70" y="356.4" width="13.2" height="0.9" fill="#cdcdcd"/><rect x="147.70" y="344.0" width="13.2" height="3.9" rx="0.8" fill="#2a8ae0"/>
<text x="154.3" y="355.7" font-size="8.8" fill="#8c8c8c" font-weight="bold" text-anchor="middle">11</text>
<rect x="5.20" y="362.5" width="12.6" height="12" fill="#fff" stroke="#dedede" stroke-width="0.6"/><rect x="4.90" y="374.2" width="13.2" height="0.9" fill="#cdcdcd"/><rect x="4.90" y="361.8" width="13.2" height="3.9" rx="0.8" fill="#2a8ae0"/>
<text x="11.5" y="373.5" font-size="8.8" fill="#8c8c8c" font-weight="bold" text-anchor="middle">12</text>
<clipPath id="cc"><rect x="0" y="392" width="166" height="7.8"/></clipPath><g clip-path="url(#cc)">
<circle cx="11.70" cy="400.2" r="6.2" fill="#fff" stroke="#34b845" stroke-width="1.3"/><path d="M9.50,398 V399 M13.90,398 V399" stroke="#34b845" stroke-width="1"/>
<circle cx="29.55" cy="400.2" r="6.2" fill="#fff" stroke="#f0a81c" stroke-width="1.3"/><path d="M27.35,398 V399 M31.75,398 V399" stroke="#f0a81c" stroke-width="1"/>
<circle cx="47.40" cy="400.2" r="6.2" fill="#fff" stroke="#e0283a" stroke-width="1.3"/><path d="M45.20,398 V399 M49.60,398 V399" stroke="#e0283a" stroke-width="1"/>
<rect x="59.15" y="394" width="12.4" height="12" fill="#fff" stroke="#34b845" stroke-width="1.3"/><path d="M62.55,396.8 H68.15" stroke="#34b845" stroke-width="1.3"/>
<rect x="77.00" y="394" width="12.4" height="12" fill="#fff" stroke="#e0283a" stroke-width="1.3"/><path d="M80.40,396.8 H86.00" stroke="#e0283a" stroke-width="1.3"/>
<rect x="94.85" y="394" width="12.4" height="12" fill="#fff" stroke="#f0a81c" stroke-width="1.3"/><path d="M98.25,396.8 H103.85" stroke="#f0a81c" stroke-width="1.3"/>
<circle cx="118.80" cy="400.2" r="6.2" fill="#fff" stroke="#34b845" stroke-width="1.3"/><path d="M116.60,398 V399 M121.00,398 V399" stroke="#34b845" stroke-width="1"/>
<circle cx="136.65" cy="400.2" r="6.2" fill="#fff" stroke="#3d87d9" stroke-width="1.3"/><path d="M134.45,398 V399 M138.85,398 V399" stroke="#3d87d9" stroke-width="1"/>
<circle cx="154.50" cy="400.2" r="6.2" fill="#fff" stroke="#e0283a" stroke-width="1.3"/><path d="M152.30,398 V399 M156.70,398 V399" stroke="#e0283a" stroke-width="1"/>
</g>
<rect x="1" y="400" width="179" height="62" fill="#f9f7f5"/>
<text x="6.2" y="413.8" font-size="9.9" fill="#555" textLength="63.1" lengthAdjust="spacingAndGlyphs">Autres icônes...</text>
<text x="6.2" y="433.8" font-size="9.9" fill="#555" textLength="110.1" lengthAdjust="spacingAndGlyphs">Organiser les marqueurs...</text>
<rect x="4" y="441.2" width="174" height="1" fill="#e2e2e2"/>
<text x="6.2" y="455.4" font-size="9.9" fill="#555" textLength="116.8" lengthAdjust="spacingAndGlyphs">Supprimer toutes les icônes</text>
</svg>
</body></html>
